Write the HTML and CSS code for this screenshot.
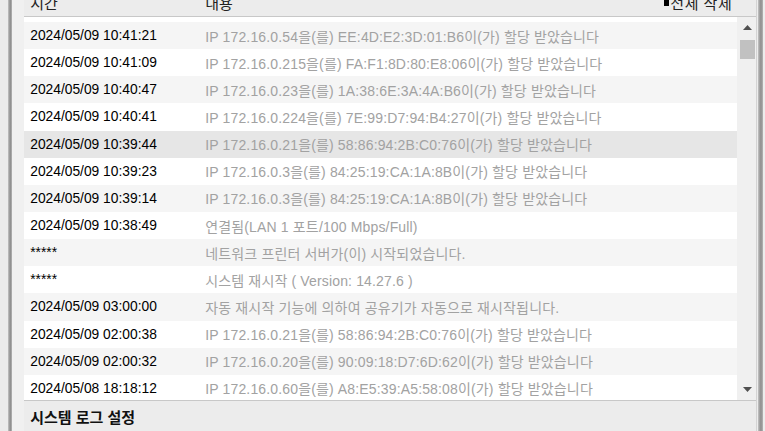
FILE: index.html
```html
<!DOCTYPE html>
<html lang="ko">
<head>
<meta charset="utf-8">
<link rel="stylesheet" href="styles.css">
</head>
<body>
<div class="frame">
  <div class="side side-left"></div>
  <div class="band"></div>
  <div class="gutter"></div>
  <div class="panel">
    <div class="head">
      <span class="h-time">시간</span>
      <span class="h-msg">내용</span>
      <span class="h-del"><span class="del-icon"></span>전체 삭제</span>
    </div>
    <div class="body">
      <div class="list">
        <div class="row alt"><span class="t">2024/05/09 10:41:21</span><span class="m">IP 172.16.0.54을(를) EE:4D:E2:3D:01:B6이(가) 할당 받았습니다</span></div>
        <div class="row"><span class="t">2024/05/09 10:41:09</span><span class="m">IP 172.16.0.215을(를) FA:F1:8D:80:E8:06이(가) 할당 받았습니다</span></div>
        <div class="row alt"><span class="t">2024/05/09 10:40:47</span><span class="m">IP 172.16.0.23을(를) 1A:38:6E:3A:4A:B6이(가) 할당 받았습니다</span></div>
        <div class="row"><span class="t">2024/05/09 10:40:41</span><span class="m">IP 172.16.0.224을(를) 7E:99:D7:94:B4:27이(가) 할당 받았습니다</span></div>
        <div class="row hover"><span class="t">2024/05/09 10:39:44</span><span class="m">IP 172.16.0.21을(를) 58:86:94:2B:C0:76이(가) 할당 받았습니다</span></div>
        <div class="row"><span class="t">2024/05/09 10:39:23</span><span class="m">IP 172.16.0.3을(를) 84:25:19:CA:1A:8B이(가) 할당 받았습니다</span></div>
        <div class="row alt"><span class="t">2024/05/09 10:39:14</span><span class="m">IP 172.16.0.3을(를) 84:25:19:CA:1A:8B이(가) 할당 받았습니다</span></div>
        <div class="row"><span class="t">2024/05/09 10:38:49</span><span class="m">연결됨(LAN 1 포트/100 Mbps/Full)</span></div>
        <div class="row alt"><span class="t">*****</span><span class="m">네트워크 프린터 서버가(이) 시작되었습니다.</span></div>
        <div class="row"><span class="t">*****</span><span class="m">시스템 재시작 ( Version: 14.27.6 )</span></div>
        <div class="row alt"><span class="t">2024/05/09 03:00:00</span><span class="m">자동 재시작 기능에 의하여 공유기가 자동으로 재시작됩니다.</span></div>
        <div class="row"><span class="t">2024/05/09 02:00:38</span><span class="m">IP 172.16.0.21을(를) 58:86:94:2B:C0:76이(가) 할당 받았습니다</span></div>
        <div class="row alt"><span class="t">2024/05/09 02:00:32</span><span class="m">IP 172.16.0.20을(를) 90:09:18:D7:6D:62이(가) 할당 받았습니다</span></div>
        <div class="row"><span class="t">2024/05/08 18:18:12</span><span class="m">IP 172.16.0.60을(를) A8:E5:39:A5:58:08이(가) 할당 받았습니다</span></div>
        <div class="row alt"><span class="t">2024/05/08 18:10:02</span><span class="m">IP 172.16.0.60을(를) A8:E5:39:A5:58:08이(가) 할당 받았습니다</span></div>
      </div>
      <div class="scrollbar">
        <svg class="arrow" width="9" height="5" viewBox="0 0 9 5"><path d="M0 5 L4.5 0 L9 5 Z" fill="#505050"/></svg>
        <div class="thumb"></div>
        <div class="track"></div>
        <svg class="arrow" width="9" height="5" viewBox="0 0 9 5"><path d="M0 0 L9 0 L4.5 5 Z" fill="#505050"/></svg>
      </div>
    </div>
    <div class="foot">시스템 로그 설정</div>
  </div>
  <div class="band band-right"></div>
  <div class="side side-right"></div>
</div>
</body>
</html>
```

FILE: styles.css
```css
html, body {
  margin: 0;
  padding: 0;
  width: 765px;
  height: 431px;
  overflow: hidden;
  background: #ececec;
  font-family: "Liberation Sans", Arial, "Noto Sans CJK KR", sans-serif;
}

.frame {
  display: flex;
  height: 431px;
}

.side-left {
  width: 8px;
  background: #ebebeb;
}

.band {
  width: 4px;
  background: linear-gradient(to right, #c4c4c4, #9a9a9a 40%, #8e8e8e 60%, #b4b4b4);
}

.band-right {
  width: 5px;
  margin-left: 1px;
}

.side-right {
  width: 2px;
  background: #ececec;
}

.gutter {
  width: 13px;
  background: #f0f0f0;
}

.panel {
  width: 732px;
  display: flex;
  flex-direction: column;
  border-right: 1px solid #d4d4d4;
}

.head {
  margin-top: -11px;
  height: 27px;
  border-bottom: 1px solid #c8c8c8;
  background: #ececec;
  display: flex;
  align-items: center;
  font-size: 15px;
  color: #222;
  flex-shrink: 0;
}

.h-time {
  width: 175px;
  padding-left: 6px;
}

.h-msg {
  flex: 1;
}

.h-del {
  display: flex;
  align-items: center;
  padding-right: 24px;
  letter-spacing: 0.5px;
}

.del-icon {
  width: 5px;
  height: 8px;
  background: #000;
  margin-right: 1px;
  margin-top: -1px;
}

.body {
  display: flex;
  height: 383px;
  flex-shrink: 0;
  border-bottom: 1px solid #c8c8c8;
}

.list {
  width: 713px;
  overflow: hidden;
  background: #fff;
  padding-top: 5px;
  box-sizing: border-box;
}

.row {
  height: 27.15px;
  display: flex;
  align-items: center;
  font-size: 14px;
  white-space: nowrap;
}

.row.alt {
  background: #f5f5f5;
}

.row.hover {
  background: #e6e6e6;
}

.t {
  width: 181px;
  padding-left: 6px;
  box-sizing: border-box;
  color: #000;
  font-size: 13.8px;
}

.m {
  color: #a2a2a2;
  letter-spacing: 0.15px;
}

.scrollbar {
  width: 19px;
  background: #f0f0f0;
  display: flex;
  flex-direction: column;
  align-items: center;
  padding: 8px 0 8px;
  box-sizing: border-box;
}

.arrow {
  display: block;
  margin-left: 1px;
}

.thumb {
  width: 15px;
  height: 19px;
  background: #c1c1c1;
  margin-top: 10px;
  margin-left: 1px;
}

.track {
  flex: 1;
}

.foot {
  flex: 1;
  background: #ececec;
  font-size: 15px;
  font-weight: bold;
  color: #111;
  padding-left: 6px;
  display: flex;
  align-items: center;
}
```
